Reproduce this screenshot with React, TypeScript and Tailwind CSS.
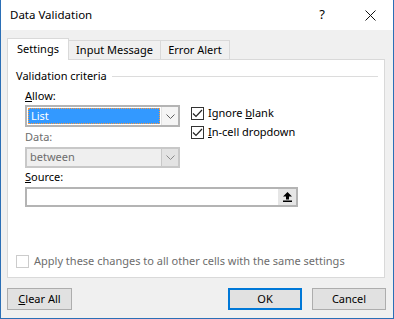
const font = { fontFamily: '"Noto Sans", "Open Sans", sans-serif' };

function Chevron({ color = '#606060' }: { color?: string }) {
  return (
    <svg width="9" height="5" viewBox="0 0 9 5" fill="none">
      <path d="M0.5 0.5 L4.5 4.5 L8.5 0.5" stroke={color} strokeWidth="1" />
    </svg>
  );
}

function Check({ checked, disabled }: { checked?: boolean; disabled?: boolean }) {
  return (
    <span
      className={`flex h-[13px] w-[13px] shrink-0 items-center justify-center border bg-white ${
        disabled ? 'border-[#cccccc]' : 'border-[#333333]'
      }`}
    >
      {checked && (
        <svg width="11" height="9" viewBox="0 0 11 9" fill="none">
          <path d="M1 4.5 L4 7.5 L10 1" stroke="#222222" strokeWidth="1.2" />
        </svg>
      )}
    </span>
  );
}

export default function App() {
  return (
    <div
      className="flex h-[319px] w-[394px] flex-col border-x border-b border-[#2b6fb6] bg-[#f0f0f0] text-[11px] text-black"
      style={font}
    >
      {/* title bar */}
      <div className="flex h-[30px] items-center bg-white">
        <span className="ml-[9px] flex-1 text-[11.5px]">Data Validation</span>
        <span className="mr-[40px] text-[13px]">?</span>
        <svg className="mr-[17px]" width="11" height="11" viewBox="0 0 11 11">
          <path d="M0.5 0.5 L10.5 10.5 M10.5 0.5 L0.5 10.5" stroke="#111" strokeWidth="1" />
        </svg>
      </div>

      <div className="flex flex-col pl-[6px]">
        {/* tabs */}
        <div className="mt-[8px] flex h-[21px] items-end">
          <div className="relative z-10 -mb-px flex h-[22px] w-[62px] items-center justify-center border-x border-t border-[#d9d9d9] bg-white">
            Settings
          </div>
          <div className="flex h-[19px] w-[92px] items-center justify-center border-r border-t border-[#d9d9d9] bg-[#f0f0f0]">
            Input Message
          </div>
          <div className="flex h-[19px] w-[69px] items-center justify-center border-r border-t border-[#d9d9d9] bg-[#f0f0f0]">
            Error Alert
          </div>
        </div>

        {/* panel */}
        <div className="flex h-[219px] w-[378px] flex-col border border-[#d9d9d9] bg-white">
          <div className="mt-[8px] flex h-[16px] items-center pl-[8px]">
            <span>Validation criteria</span>
            <span className="ml-[5px] mr-[6px] h-px flex-1 bg-[#dcdcdc]" />
          </div>

          <div className="flex pl-[17px]">
            <div className="flex w-[155px] shrink-0 flex-col">
              <span className="mt-[4px] h-[16px] leading-[16px]">
                <span className="underline">A</span>llow:
              </span>
              {/* List combo */}
              <div className="mt-[1px] flex h-[22px] border-2 border-[#b4b4b4] bg-white">
                <div className="m-[1px] flex flex-1 items-center bg-[#3399ff] outline-1 outline-dotted outline-[#ff9a3c] -outline-offset-1">
                  <span className="pl-[3px] text-white">List</span>
                </div>
                <div className="flex w-[17px] items-center justify-center border-l border-[#e3e3e3] bg-[#f5f5f5]">
                  <Chevron />
                </div>
              </div>
              <span className="mt-[2px] h-[16px] leading-[16px] text-[#6d6d6d]">Data:</span>
              {/* between combo */}
              <div className="mt-[2px] flex h-[21px] border-2 border-[#c8c8c8] bg-[#efefef]">
                <span className="flex flex-1 items-center pl-[3px] text-[#6d6d6d]">between</span>
                <div className="flex w-[17px] items-center justify-center border-l border-[#c8c8c8] bg-[#e3e3e3]">
                  <Chevron color="#8a8a8a" />
                </div>
              </div>
            </div>

            <div className="ml-[11px] flex flex-col">
              <div className="mt-[23px] flex h-[13px] items-center gap-[4px]">
                <Check checked />
                <span>
                  Ignore <span className="underline">b</span>lank
                </span>
              </div>
              <div className="mt-[6px] flex h-[13px] items-center gap-[4px]">
                <Check checked />
                <span>
                  <span className="underline">I</span>n-cell dropdown
                </span>
              </div>
            </div>
          </div>

          <div className="flex flex-col pl-[17px]">
            <span className="mt-[1px] h-[16px] leading-[16px]">
              <span className="underline">S</span>ource:
            </span>
            <div className="mt-[2px] flex h-[20px] w-[273px] border-2 border-[#b4b4b4] bg-white">
              <span className="flex-1" />
              <div className="flex w-[18px] items-center justify-center bg-[#e6e6e6]">
                <svg width="9" height="10" viewBox="0 0 9 10">
                  <path d="M4.5 0 L9 4.5 L6 4.5 L6 7.5 L3 7.5 L3 4.5 L0 4.5 Z" fill="#000" />
                  <rect x="0" y="8.5" width="9" height="1.5" fill="#000" />
                </svg>
              </div>
            </div>
          </div>

          <div className="mt-[46px] flex items-center gap-[5px] pl-[8px]">
            <Check disabled />
            <span className="text-[#6d6d6d]">Apply these changes to all other cells with the same settings</span>
          </div>
        </div>

        {/* buttons */}
        <div className="mt-[10px] flex h-[22px] w-[379px]">
          <button className="flex w-[65px] items-center justify-center border border-[#adadad] bg-[#e1e1e1]">
            <span>
              <span className="underline">C</span>lear All
            </span>
          </button>
          <span className="flex-1" />
          <button className="flex w-[74px] items-center justify-center border-2 border-[#0078d7] bg-[#e1e1e1]">
            OK
          </button>
          <button className="ml-[10px] flex w-[74px] items-center justify-center border border-[#adadad] bg-[#e1e1e1]">
            Cancel
          </button>
        </div>
      </div>
    </div>
  );
}
